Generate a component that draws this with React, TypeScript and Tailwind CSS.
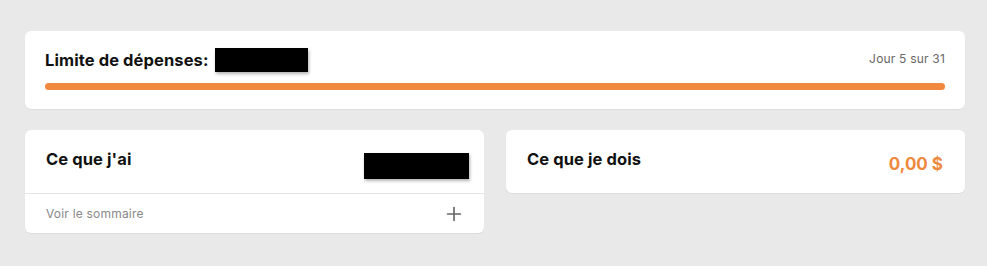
import { Plus } from 'lucide-react';

const font = { fontFamily: 'Inter, "Noto Sans", sans-serif' };

export default function App() {
  return (
    <div className="w-[987px] h-[266px] bg-[#e9e9e9] pl-[25px] pr-[22px] pt-[31px] text-[#111]" style={font}>
      <div className="bg-white rounded-md shadow-[0_1px_1px_rgba(0,0,0,0.06)] px-5 pt-[17px] pb-5 h-[78px]">
        <div className="flex items-start justify-between">
          <div className="flex items-center gap-[6px]">
            <span className="text-[16.5px] font-bold tracking-[0.1px]">Limite de dépenses:</span>
            <span className="block w-[93px] h-6 bg-black shadow-[1px_2px_3px_rgba(0,0,0,0.3)]" />
          </div>
          <span className="text-[12px] text-[#666] pt-[2px] tracking-[0.2px]">Jour 5 sur 31</span>
        </div>
        <div className="mt-[10px] h-[7px] rounded-full bg-[#f0883e]" />
      </div>

      <div className="flex gap-[22px] mt-[21px] items-start">
        <div className="w-[459px] bg-white rounded-md shadow-[0_1px_1px_rgba(0,0,0,0.06)]">
          <div className="flex items-center justify-between h-[63px] pl-[21px] pr-[15px]">
            <span className="text-[16.5px] font-bold -mt-[4px] tracking-[0.1px]">Ce que j'ai</span>
            <span className="block w-[105px] h-[26px] bg-black shadow-[1px_2px_3px_rgba(0,0,0,0.3)] mt-[9px]" />
          </div>
          <div className="border-t border-[#e6e6e6] flex items-center justify-between h-[40px] pl-[21px] pr-[19px]">
            <span className="text-[12px] text-[#888] tracking-[0.2px]">Voir le sommaire</span>
            <Plus className="w-[22px] h-[22px] text-[#666]" strokeWidth={1.8} />
          </div>
        </div>
        <div className="w-[459px] h-[63px] bg-white rounded-md shadow-[0_1px_1px_rgba(0,0,0,0.06)] flex items-center justify-between pl-[21px] pr-[22px]">
          <span className="text-[16.5px] font-bold -mt-[4px] tracking-[0.1px]">Ce que je dois</span>
          <span className="text-[17px] font-bold text-[#ee8a40] mt-[6px]">0,00 $</span>
        </div>
      </div>
    </div>
  );
}
